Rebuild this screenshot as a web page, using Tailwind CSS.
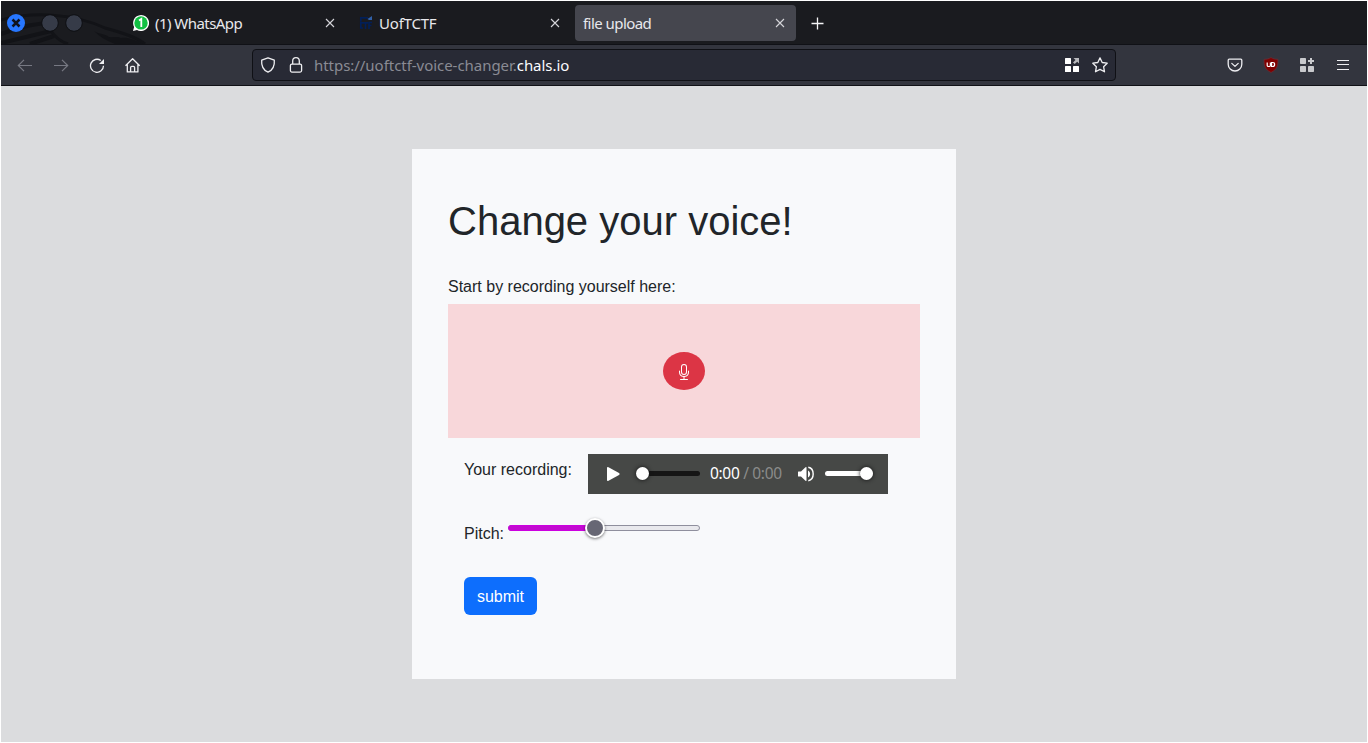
<!DOCTYPE html>
<html lang="en">
<head>
<meta charset="utf-8">
<title>file upload</title>
<script src="https://cdn.jsdelivr.net/npm/@tailwindcss/browser@4"></script>
</head>
<body class="h-[743px] w-[1368px] overflow-hidden bg-white p-px font-['Liberation_Sans',Arial,sans-serif] text-base text-[#212529]">
<div class="flex h-[741px] w-[1366px] flex-col bg-[#dbdcde]">

  <!-- tab strip -->
  <header class="relative flex h-[43px] shrink-0 items-center overflow-hidden bg-[#1a1b1f] font-['Noto_Sans',sans-serif] text-[15px] tracking-[-0.55px] text-[#e8e8ec]">
    <svg class="absolute left-0 top-0" width="160" height="43" viewBox="1 1 160 43" fill="none" stroke="#121317">
      <path d="M1 20C35 11 75 14 105 28c18 5 31 9 40 16" stroke-width="3"/>
      <path d="M1 34c22-8 35-11 53-11M1 43l50-12M30 44l24-8" stroke-width="4"/>
      <path d="M51 31c4 6 8 10 17 13" stroke-width="3"/>
      <path d="M94 31c6 4 10 2 15 6 5 1 8-1 12 1 7-1 14 2 22 6h-28c-8-3-15-7-21-13z" fill="#121317" stroke="none"/>
    </svg>
    <div class="relative flex w-[132px] shrink-0 items-center pl-[6px]">
      <svg width="18" height="18" viewBox="0 0 18 18"><circle cx="9" cy="9" r="9" fill="#2777ff"/><path d="M5.500 5.500l7 7m0-7l-7 7" stroke="#10131c" stroke-width="2.500"/></svg>
      <svg class="ml-[16px]" width="18" height="18" viewBox="0 0 18 18"><circle cx="9" cy="9" r="8.300" fill="#363b48" stroke="#0e0f13"/></svg>
      <svg class="ml-[6px]" width="18" height="18" viewBox="0 0 18 18"><circle cx="9" cy="9" r="8.300" fill="#363b48" stroke="#0e0f13"/></svg>
    </div>
    <div class="relative flex w-[225px] shrink-0 items-center">
      <svg class="shrink-0" width="16" height="16" viewBox="0 0 16 16"><path d="M0 16l1.100-4.100A8 8 0 1 1 4 14.900z" fill="#fff"/><circle cx="8" cy="7.900" r="6.700" fill="#12c143"/><path d="M6 5.400l2.300-1.500v8" fill="none" stroke="#fff" stroke-width="1.800"/></svg>
      <span class="ml-[6px] mt-0.5 whitespace-nowrap">(1) WhatsApp</span>
      <svg class="ml-auto mr-[23px]" width="10" height="10" viewBox="0 0 10 10"><path d="M1 1l8 8m0-8l-8 8" stroke="#d6d6da" stroke-width="1.100"/></svg>
    </div>
    <div class="relative flex w-[216px] shrink-0 items-center">
      <svg class="ml-px shrink-0" width="15" height="16" viewBox="0 0 15 16" fill="none" stroke="#021f58" stroke-width="1.700"><path d="M9 2.800H1.800v4M6 7.800H1.800V13H4M5 7.800h4M6.500 7.800V14M13 7.500h-3V14M10 10.500h2.500"/><path d="M8.500 4l4.500-3v4h-3z" fill="#3161a9" stroke="none"/></svg>
      <span class="ml-[5px] mt-0.5 whitespace-nowrap tracking-[-0.2px]">UofTCTF</span>
      <svg class="ml-auto mr-[14px]" width="10" height="10" viewBox="0 0 10 10"><path d="M1 1l8 8m0-8l-8 8" stroke="#d6d6da" stroke-width="1.100"/></svg>
    </div>
    <div class="relative ml-px flex h-9 w-[221px] shrink-0 items-center rounded bg-[#45464e] pl-2">
      <span class="mt-0.5 whitespace-nowrap">file upload</span>
      <svg class="ml-auto mr-[11px]" width="10" height="10" viewBox="0 0 10 10"><path d="M1 1l8 8m0-8l-8 8" stroke="#d6d6da" stroke-width="1.100"/></svg>
    </div>
    <svg class="ml-[15px] mt-px" width="13" height="13" viewBox="0 0 13 13"><path d="M6.500.500v12M.500 6.500h12" stroke="#f4f4f6" stroke-width="1.300"/></svg>
  </header>

  <!-- navigation toolbar -->
  <nav class="flex h-[42px] shrink-0 items-center border-y border-[#101116] bg-[#33353e] text-[#eeeef1]">
    <div class="flex w-[251px] items-center pl-4">
      <svg class="text-[#777983]" width="16" height="16" viewBox="0 0 16 16" fill="none" stroke="currentColor" stroke-width="1.200"><path d="M15 8.500H1.500M7 2.800L1.300 8.500 7 14.200"/></svg>
      <svg class="ml-5 text-[#777983]" width="16" height="16" viewBox="0 0 16 16" fill="none" stroke="currentColor" stroke-width="1.200"><path d="M1 8.500h13.500M9 2.800l5.700 5.700L9 14.200"/></svg>
      <svg class="ml-5" width="16" height="16" viewBox="0 0 16 16" fill="none" stroke="currentColor" stroke-width="1.300"><path d="M14.500 8.800A6.500 6.500 0 1 1 11.800 3.500"/><path d="M15 2V6.900h-5z" fill="currentColor" stroke="none"/></svg>
      <svg class="ml-5" width="16" height="16" viewBox="0 0 16 16" fill="none" stroke="currentColor" stroke-width="1.300" stroke-linejoin="round"><path d="M.500 8.700L7.600 1.700l7.100 7M2.300 7.200v7.700h10.600V7.200M5.600 14.800V10.500q0-1.200 1.200-1.200h1.600q1.200 0 1.200 1.200v4.300"/></svg>
    </div>
    <div class="flex h-8 w-[864px] items-center rounded border border-[#0f1015] bg-[#282a35] pl-[7px] font-['Noto_Sans',sans-serif] text-[15px] tracking-[-0.04px]">
      <svg width="16" height="16" viewBox="0 0 16 16" fill="none" stroke="currentColor" stroke-width="1.300" stroke-linejoin="round"><path d="M8 .800l6.300 2.400c.500 5.500-2 10-6.300 12-4.300-2-6.800-6.500-6.300-12z"/></svg>
      <svg class="ml-3" width="16" height="16" viewBox="0 0 16 16" fill="none" stroke="currentColor" stroke-width="1.300"><rect x="2.400" y="7.100" width="11.200" height="8" rx="1.500"/><path d="M4.700 7V4a3.300 3.300 0 0 1 6.600 0v3"/></svg>
      <span class="ml-[10px] whitespace-nowrap text-[#8a8b94]">https://uoftctf-voice-changer.<span class="text-[#fbfbfe]">chals.io</span></span>
      <svg class="ml-auto" width="16" height="16" viewBox="0 0 16 16" fill="#fff"><rect x="1" y="1" width="6" height="6" rx=".5"/><rect x="1" y="9" width="6" height="6" rx=".5"/><rect x="9" y="9" width="6" height="6" rx=".5"/><path d="M9.500 1H15v5.500l-1.800-1.800L10.700 7 9 5.500l2.500-2.500z" fill="#b8b9bd"/></svg>
      <svg class="ml-3 mr-[7px]" width="16" height="16" viewBox="0 0 16 16" fill="none" stroke="currentColor" stroke-width="1.300" stroke-linejoin="round"><path d="M8 .900l2.200 4.600 5 .700-3.600 3.500.900 5.100L8 12.400l-4.500 2.400.900-5.100L.800 6.200l5-.700z"/></svg>
    </div>
    <div class="ml-auto mr-4 flex items-center gap-5">
      <svg width="16" height="16" viewBox="0 0 16 16" fill="none" stroke="currentColor" stroke-width="1.300" stroke-linejoin="round" stroke-linecap="round"><path d="M2.200 2.200h11.600q1 0 1 1v4a6.800 6.800 0 0 1-13.600 0v-4q0-1 1-1z"/><path d="M4.800 6.400L8 9.400l3.200-3"/></svg>
      <svg width="16" height="16" viewBox="0 0 16 16"><path d="M8 .500c2 1.300 4 1.800 6.900 1.800.300 6.500-.900 10.200-6.900 13.200C2 12.500.800 8.800 1.100 2.300 4 2.300 6 1.800 8 .500z" fill="#800000" stroke="#68313a" stroke-width=".7"/><path d="M4.200 5.500v3q0 1 1.300 1h.800q1.100 0 1.100-1v-3M8.600 5.500v4h1.200q1.800 0 1.800-2t-1.800-2z" fill="none" stroke="#fff" stroke-width="1.200"/></svg>
      <svg width="16" height="16" viewBox="0 0 16 16" fill="#c9cacd"><rect x="1" y="1" width="6" height="6" rx=".7"/><rect x="1" y="9" width="6" height="6" rx=".7"/><rect x="9" y="9" width="6" height="6" rx=".7"/><path d="M11 1h2v2h2v2h-2v2h-2V5H9V3h2z"/></svg>
      <svg width="16" height="16" viewBox="0 0 16 16" stroke="currentColor" stroke-width="1.200"><path d="M2 3.500h12M2 7.500h12M2 12.500h12"/></svg>
    </div>
  </nav>

  <main class="flex flex-1 items-start justify-center pt-[63px]">
    <form class="h-[530px] w-[544px] bg-[#f8f9fb] px-9 pt-12">
      <h1 class="text-[40px] leading-[48px]">Change your voice!</h1>
      <p class="mt-[30px] leading-6">Start by recording yourself here:</p>
      <div class="mt-[5px] flex h-[134px] items-center justify-center bg-[#f8d7da]">
        <button type="button" class="flex h-[38px] w-[42px] items-center justify-center rounded-[50%] bg-[#dc3545] text-white" aria-label="Record">
          <svg class="mt-0.5" width="16" height="16" viewBox="0 0 16 16" fill="currentColor"><path d="M3.500 6.500A.5.500 0 0 1 4 7v1a4 4 0 0 0 8 0V7a.5.500 0 0 1 1 0v1a5 5 0 0 1-4.500 4.975V15h3a.5.500 0 0 1 0 1h-7a.5.500 0 0 1 0-1h3v-2.025A5 5 0 0 1 3 8V7a.5.500 0 0 1 .5-.5z"/><path d="M10 8a2 2 0 1 1-4 0V3a2 2 0 1 1 4 0v5zM8 0a3 3 0 0 0-3 3v5a3 3 0 0 0 6 0V3a3 3 0 0 0-3-3z"/></svg>
        </button>
      </div>
      <div class="mt-4 flex items-start pl-4">
        <span class="mt-1 w-[124px] leading-6">Your recording:</span>
        <div class="flex h-10 w-[300px] items-center bg-[#464846] pb-px font-['Noto_Sans',sans-serif] text-[15.5px] tracking-[-0.33px] text-white">
          <svg class="ml-[18px] mt-px" width="16" height="16" viewBox="0 0 16 16"><path d="M1 2Q1 .500 2.500 1.200L13 7q1.500 1 0 2L2.500 14.800Q1 15.500 1 14z" fill="#fff"/></svg>
          <div class="relative ml-[16px] h-[5px] w-[62px] rounded-full bg-[#151515]"><i class="absolute -left-[2px] -top-1 size-[13px] rounded-full bg-white shadow-[0_0_4px_#111]"></i></div>
          <span class="ml-[10px] w-[72px] whitespace-nowrap">0:00<span class="text-[#8b8c8b]"> / 0:00</span></span>
          <svg class="ml-[15px] mt-px shrink-0" width="18" height="16" viewBox="0 0 18 16"><path d="M1.500 5.500H4L8.500 1.300q1-.7 1 .4v12.600q0 1.100-1 .400L4 10.500H1.500Q1 10.500 1 10V6q0-.5.500-.5z" fill="#fff"/><path d="M11 4.500c2.800 1.500 2.800 5.500 0 7z" fill="#fff"/><path d="M11.300 1.300c6.500 1.200 6.500 12.200 0 13.400" fill="none" stroke="#fff" stroke-width="1.400"/></svg>
          <div class="relative ml-[10px] h-[5px] w-[48px] shrink-0 rounded-full bg-white"><i class="absolute right-0 -top-1 size-[13px] rounded-full bg-white shadow-[0_0_4px_#111]"></i></div>
        </div>
      </div>
      <div class="mt-[28px] flex h-6 items-center pl-4">
        <span class="w-[44px] leading-6">Pitch:</span>
        <div class="relative -mt-[12px] h-[6px] w-[192px] rounded-full border border-[#8f8f9d] bg-[#e9e9ed]">
          <i class="absolute -left-px -top-px h-[6px] w-[88px] rounded-l-full border border-[#cc00e0] bg-[#c30bd1]"></i>
          <i class="absolute left-[76px] -top-[8px] size-5 rounded-full border-2 border-white bg-[#676774] shadow-[0_1px_3px_#0008]"></i>
        </div>
      </div>
      <button type="button" class="ml-4 mt-[31px] flex h-[38px] w-[73px] items-center justify-center rounded-md bg-[#0d6efd] pt-0.5 text-white">submit</button>
    </form>
  </main>
</div>
</body>
</html>
